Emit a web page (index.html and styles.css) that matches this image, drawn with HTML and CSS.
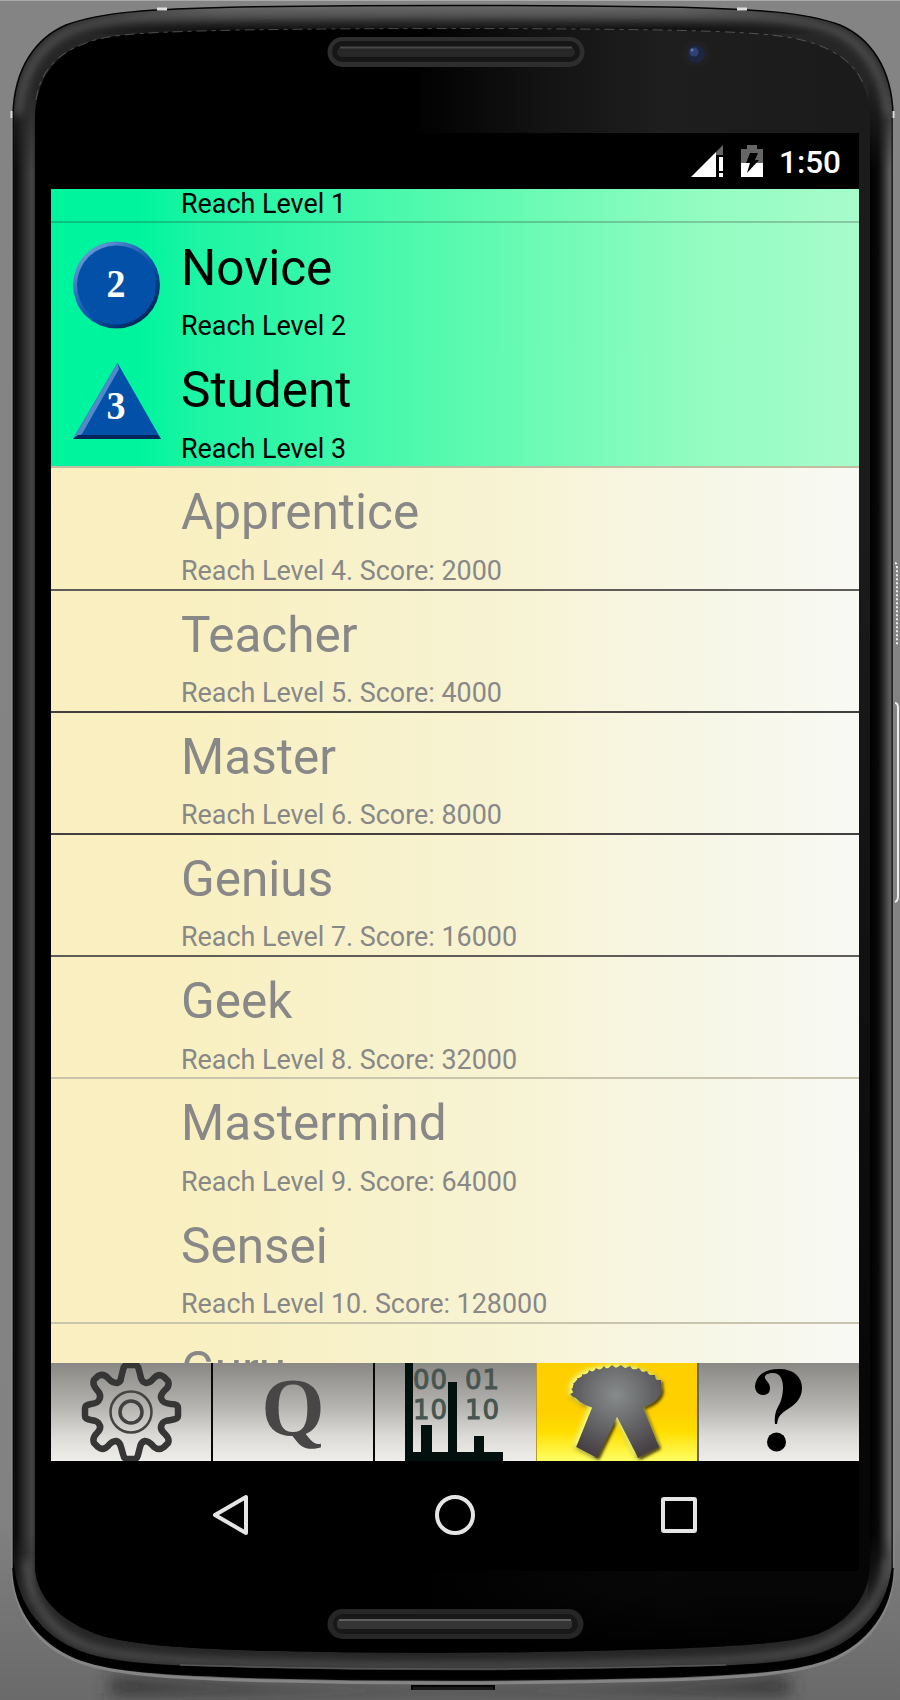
FILE: index.html
```html
<!DOCTYPE html>
<html lang="en">
<head>
<meta charset="utf-8">
<title>Levels</title>
<link rel="stylesheet" href="styles.css">
</head>
<body>
<div class="phone">
<svg class="frame" viewBox="0 0 900 1700" width="900" height="1700">
<defs>
<linearGradient id="bg" x1="0" y1="0" x2="0" y2="1"><stop offset="0" stop-color="#848484"/><stop offset=".89" stop-color="#828282"/><stop offset=".96" stop-color="#727272"/><stop offset="1" stop-color="#6a6a6a"/></linearGradient>
<linearGradient id="topband" gradientUnits="userSpaceOnUse" x1="0" y1="7" x2="0" y2="29"><stop offset="0" stop-color="#707070"/><stop offset=".45" stop-color="#444"/><stop offset=".8" stop-color="#222"/><stop offset="1" stop-color="#111"/></linearGradient>
<linearGradient id="leftband" gradientUnits="userSpaceOnUse" x1="13" y1="0" x2="35" y2="0"><stop offset="0" stop-color="#1a1a1a"/><stop offset=".12" stop-color="#0a0a0a"/><stop offset=".4" stop-color="#222"/><stop offset=".85" stop-color="#444"/><stop offset="1" stop-color="#333"/></linearGradient>
<linearGradient id="rightband" gradientUnits="userSpaceOnUse" x1="870" y1="0" x2="894" y2="0"><stop offset="0" stop-color="#000"/><stop offset=".35" stop-color="#0a0a0a"/><stop offset=".6" stop-color="#333"/><stop offset=".8" stop-color="#5a5a5a"/><stop offset="1" stop-color="#686868"/></linearGradient>
<linearGradient id="face" x1="0" x2="1" y1="0" y2="0"><stop offset=".45" stop-color="#000"/><stop offset=".62" stop-color="#141414"/><stop offset=".75" stop-color="#1e1e1e"/><stop offset="1" stop-color="#1b1b1b"/></linearGradient>
<linearGradient id="fade" x1="0" x2="0" y1="0" y2="1"><stop offset=".3" stop-color="#000" stop-opacity="0"/><stop offset=".85" stop-color="#000" stop-opacity=".75"/><stop offset=".96" stop-color="#000" stop-opacity=".78"/><stop offset="1" stop-color="#000"/></linearGradient>
<linearGradient id="vfade" x1="0" x2="0" y1="0" y2="1"><stop offset="0" stop-color="#000"/><stop offset=".06" stop-color="#fff"/><stop offset=".95" stop-color="#fff"/><stop offset="1" stop-color="#000"/></linearGradient>
<linearGradient id="hfade" x1="0" x2="1" y1="0" y2="0"><stop offset="0" stop-color="#000"/><stop offset=".2" stop-color="#fff"/><stop offset=".8" stop-color="#fff"/><stop offset="1" stop-color="#000"/></linearGradient>
<mask id="vmask" maskUnits="userSpaceOnUse" x="0" y="80" width="900" height="1530"><rect y="80" width="900" height="1530" fill="url(#vfade)"/></mask>
<mask id="hmask" maskUnits="userSpaceOnUse" x="70" y="0" width="766" height="40"><rect x="70" width="766" height="40" fill="url(#hfade)"/></mask>
<filter id="soft" x="-10%" y="-10%" width="120%" height="120%"><feGaussianBlur stdDeviation="4"/></filter>
<filter id="wide" x="-20%" y="-200%" width="140%" height="500%"><feGaussianBlur stdDeviation="9"/></filter>
<clipPath id="bodyclip"><path id="outline" d="M13 115C14 68 36 38 66 25C100 12 150 9 240 7Q450 4 666 7C756 9 806 12 840 25C870 38 892 68 893 115V1568C892 1612 866 1643 830 1658C800 1670 756 1674 666 1677Q450 1683 240 1677C150 1674 106 1670 76 1658C40 1643 14 1612 13 1568Z"/></clipPath>
</defs>
<rect width="900" height="1700" fill="url(#bg)"/>
<rect width="900" height="1" fill="#aaa"/>
<path d="M110 1678Q450 1700 790 1678V1694H110Z" fill="#2a2a2a" filter="url(#wide)"/>
<path d="M12.500 1570C14 1614 39 1646 76 1660.500C106 1672 150 1677 240 1680Q450 1686 666 1680C756 1677 800 1672 830 1660.500C867 1646 892 1614 893.500 1570" fill="none" stroke="#858585" stroke-width="3"/>
<use href="#outline" fill="#262626"/>
<g clip-path="url(#bodyclip)">
<g mask="url(#vmask)"><rect x="10" y="80" width="26" height="1530" fill="url(#leftband)"/>
<rect x="868" y="80" width="28" height="1530" fill="url(#rightband)"/></g>
<rect x="70" y="4" width="766" height="30" fill="url(#topband)" mask="url(#hmask)"/>
<path d="M18 115C22 68 44 42 70 31C100 18 150 15 240 12Q450 9 666 12C756 14 802 18 834 30C862 42 884 70 888 115" fill="none" stroke="#5c5c5c" stroke-width="6" filter="url(#soft)"/>
<path d="M27 1560C28 1602 50 1630 82 1644C112 1656 160 1660 240 1663Q450 1669 666 1663C746 1660 800 1656 826 1642C862 1624 884 1598 887 1560" fill="none" stroke="#606060" stroke-width="5" filter="url(#soft)"/>
<path d="M13 1562C14 1612 40 1643 76 1658C106 1670 150 1674 240 1677Q450 1683 666 1677C756 1674 800 1670 830 1658C866 1643 892 1612 893 1562C889 1608 862 1637 828 1651C798 1663 756 1666 666 1668Q450 1674 240 1668C150 1666 108 1663 78 1651C44 1637 17 1608 13 1562Z" fill="#000" stroke="#000" stroke-width="1.500"/>
</g>
<path id="faceshape" d="M35 115C37 80 53 55 86 43C110 33 160 32 240 30Q450 27 666 30C746 32 790 34 818 45C850 57 868 80 870 115V1568C868 1598 848 1622 818 1634C790 1643 746 1646 666 1649Q450 1656 240 1650C160 1647 125 1643 96 1634C60 1620 37 1598 35 1568Z" fill="url(#face)"/>
<path d="M35 115C37 80 53 55 86 43C110 33 160 32 240 30Q450 27 666 30C746 32 790 34 818 45C850 57 868 80 870 115V1568C868 1598 848 1622 818 1634C790 1643 746 1646 666 1649Q450 1656 240 1650C160 1647 125 1643 96 1634C60 1620 37 1598 35 1568Z" fill="url(#fade)"/>
<path d="M36 100C40 72 56 54 86 43C110 33 160 32 240 30Q450 27 666 30C746 32 790 34 818 45C842 54 858 68 864 86" fill="none" stroke="#777" stroke-width="1" stroke-dasharray="10 5 4 5" opacity=".6"/>
<use href="#outline" fill="none" stroke="#050505" stroke-width="1.500"/>
<path d="M180 1665Q450 1673 726 1665" fill="none" stroke="#565656" stroke-width="1.500"/>
<path d="M12 118V1568" stroke="#949494" stroke-width="1"/>
<path d="M894 118V1568" stroke="#858585" stroke-width="2"/><path d="M892 118V1568" stroke="#292929" stroke-width="1.500"/>
<path d="M157 9h10M737 9h10" stroke="#ddd" stroke-width="3"/><path d="M11.500 111v7M893.500 111v7" stroke="#ddd" stroke-width="2"/>
<path d="M895 563q2 0 2 4V646" fill="none" stroke="#eee" stroke-width="2" stroke-dasharray="2 2"/>
<path d="M895 703q3 0 3 5V896q0 5-3 6" fill="none" stroke="#eee" stroke-width="2"/>
<path d="M412 1690v-4H494v4" fill="#1a1a1a" stroke="#050505" stroke-width="2"/>
<rect x="327.500" y="37" width="257" height="30" rx="15" fill="#2e2e2e"/><rect x="332" y="41" width="248" height="21" rx="10.500" fill="#161616"/><rect x="337" y="47" width="238" height="10" rx="5" fill="#272727"/><path d="M340 47.500H572" stroke="#484848" stroke-width="2"/>
<rect x="327.500" y="1609" width="256" height="30" rx="15" fill="#262626"/><rect x="333" y="1614" width="245" height="20" rx="10" fill="#181818"/><rect x="337" y="1619" width="235" height="10" rx="4" fill="#353535"/><path d="M339 1620H571" stroke="#606060" stroke-width="2"/>
<circle cx="696" cy="54" r="13.500" fill="#202022"/><circle cx="696" cy="54" r="9" fill="#1e253e"/><circle cx="694" cy="52" r="4.500" fill="#2f4273"/><circle cx="692" cy="50" r="1.500" fill="#5f7aa8"/>
</svg>
<main class="screen">
<header class="status">
<svg class="signal" width="34" height="34" viewBox="0 0 34 34"><path d="M1 33H26V8Z" fill="#fff"/><path d="M26 8L33 1V11H26Z" fill="#666"/><path d="M29 13h4v14h-4zM29 29h4v4h-4z" fill="#fff"/></svg>
<svg class="battery" width="22" height="32" viewBox="0 0 22 32"><path d="M0 4H6V0H16V4H22V18H0Z" fill="#666"/><path d="M0 18H22V32H0Z" fill="#fff"/><path d="M9 8H17L14 15H18L6 28L9 18H5Z" fill="#000"/></svg>
<span class="clock">1:50</span>
</header>
<section class="list">
<article class="row done first lined"><p>Reach Level 1</p></article>
<article class="row done tall"><svg class="badge" width="88" height="90" viewBox="0 0 88 90"><defs><linearGradient id="rim" x1=".15" y1=".1" x2=".85" y2=".9"><stop offset="0" stop-color="#6a9ad8"/><stop offset=".35" stop-color="#2869ba"/><stop offset=".6" stop-color="#0650a8"/><stop offset="1" stop-color="#012453"/></linearGradient></defs><circle cx="43.500" cy="44" r="43.500" fill="url(#rim)"/><circle cx="43.500" cy="44" r="39.500" fill="#0350a8"/><text x="43" y="56" class="num" textLength="19" lengthAdjust="spacingAndGlyphs">2</text></svg><h2>Novice</h2><p>Reach Level 2</p></article>
<article class="row done lined tan"><svg class="badge" width="88" height="90" viewBox="0 0 88 90"><path d="M0 76L44.500 0L88 76Z" fill="#0350a8"/><path d="M0 76L44.500 0L46 6L9 71Z" fill="#5289cb"/><path d="M0 76L5 72H85L88 76Z" fill="#01265b"/><text x="43" y="56" class="num" textLength="19" lengthAdjust="spacingAndGlyphs">3</text></svg><h2>Student</h2><p>Reach Level 3</p></article>
<article class="row lined mid"><h2>Apprentice</h2><p>Reach Level 4. Score: 2000</p></article>
<article class="row lined dark"><h2>Teacher</h2><p>Reach Level 5. Score: 4000</p></article>
<article class="row lined dark"><h2>Master</h2><p>Reach Level 6. Score: 8000</p></article>
<article class="row lined mid"><h2>Genius</h2><p>Reach Level 7. Score: 16000</p></article>
<article class="row lined light"><h2>Geek</h2><p>Reach Level 8. Score: 32000</p></article>
<article class="row"><h2>Mastermind</h2><p>Reach Level 9. Score: 64000</p></article>
<article class="row lined light"><h2>Sensei</h2><p>Reach Level 10. Score: 128000</p></article>
<article class="row last-row"><h2>Guru</h2></article>
</section>
<nav class="tabs">
<div class="tab"><svg width="161" height="98" viewBox="0 0 161 98"><path d="M72 7Q73 2 76 2H84Q87 2 88 7L90 15Q91 19 95 20Q99 20 103 15Q108 10 113 14L117 18Q119 23 114 27Q108 33 111 37Q112 40 120 41Q127 41 127 45V53Q127 56 120 57Q112 58 111 61Q108 66 114 71Q119 76 117 80L113 84Q108 88 103 84Q98 78 94 78Q90 79 89 84L87 92Q86 96 83 96H76Q73 96 72 91L70 84Q69 79 65 78Q61 78 57 83Q52 88 47 84L43 80Q41 75 46 70Q51 65 48 61Q47 58 40 57Q34 56 34 53V45Q34 42 40 41Q47 40 48 37Q51 32 46 27Q41 21 43 17L47 13Q52 10 57 15Q61 20 66 20Q70 19 70 15Z" fill="none" stroke="#363636" stroke-width="6.500"/><circle cx="80" cy="49" r="20.500" fill="none" stroke="#444" stroke-width="2.500"/><circle cx="80" cy="49" r="11" fill="none" stroke="#404040" stroke-width="3.500"/></svg></div>
<div class="tab"><svg width="161" height="98" viewBox="0 0 161 98"><text x="80" y="71.500" class="q" textLength="63" lengthAdjust="spacingAndGlyphs">Q</text></svg></div>
<div class="tab"><svg width="161" height="98" viewBox="0 0 161 98"><path d="M30 0H38V89H46V62H57V89H73V19H82V89H99V73H109V89H128V98H30Z" fill="#03110e"/><g class="bits"><text x="38" y="26" textLength="34">00</text><text x="38" y="56" textLength="34">10</text><text x="90" y="26" textLength="34">01</text><text x="90" y="56" textLength="34">10</text></g></svg></div>
<div class="tab active"><svg width="161" height="98" viewBox="0 0 161 98"><defs><radialGradient id="metal" gradientUnits="userSpaceOnUse" cx="79" cy="32" r="63"><stop stop-color="#888b8c"/><stop offset=".5" stop-color="#67686a"/><stop offset="1" stop-color="#464044"/></radialGradient><filter id="shadow" x="-20%" y="-20%" width="140%" height="140%"><feDropShadow dx="-3" dy="-2" stdDeviation="2" flood-color="#ffff70"/><feDropShadow dx="2" dy="2" stdDeviation="1.500" flood-color="#453800"/></filter></defs><g filter="url(#shadow)" fill="url(#metal)"><path d="M56 42L39 84L60 95L80 54L101 95L122 84L105 42Z"/><ellipse cx="80" cy="26.500" rx="44.800" ry="22"/><path d="M36 34L33 31L37 29L34 26L38 24L36 20L41 19L40 15L45 15L45 11L50 12L52 7L56 9L59 5L63 7L67 3L70 6L75 2L79 5L84 2L88 5L93 3L96 7L102 5L105 9L110 8L112 12L118 12L119 17L124 17L124 27L100 40H55Z"/></g></svg></div>
<div class="tab last"><svg width="161" height="98" viewBox="0 0 161 98"><path d="M56 23C58 10 68 6 80 6C95 6 103 14 103 25C103 37 94 43 86 48C79 53 79 56 78 61H76C75 52 77 47 81 40C85 31 87 10 74 10C69 10 65 12 66 15C67 18 71 20 71 25C71 30 68 32 64 32C59 32 56 28 56 23Z"/><circle cx="77.500" cy="79" r="9.500"/></svg></div>
</nav>
<footer class="system">
<svg width="38" height="44" viewBox="0 0 38 44"><path d="M3 21L34 3V39Z" class="line"/></svg>
<svg width="42" height="44" viewBox="0 0 42 44"><circle cx="21" cy="21" r="18" class="line"/></svg>
<svg width="38" height="44" viewBox="0 0 38 44"><rect x="3" y="5" width="32" height="32" rx="1" class="line"/></svg>
</footer>
</main>
</div>
</body>
</html>
```
FILE: styles.css
```css
* { box-sizing: border-box; }
body { margin: 0; background: #828282; font-family: Roboto, sans-serif; }
.phone { position: relative; width: 900px; height: 1700px; padding: 133px 41px 0 51px; overflow: hidden; }
.frame { position: absolute; inset: 0; }
.screen { position: relative; display: flex; flex-direction: column; width: 808px; height: 1438px; background: #000; }
.status { display: flex; height: 56px; padding: 11px 18px 0 0; justify-content: flex-end; align-items: flex-start; color: #fff; }
.battery { margin: 1px 16px 0 17px; }
.clock { font-size: 31.5px; font-weight: 500; line-height: 38px; }
.list { height: 1174px; overflow: hidden; background: linear-gradient(90deg, #faefc0 0, #f9f0c2 20%, #f7f3d2 55%, #f7f7e8 82%, #f8f9f3 100%); }
.row { display: grid; grid-template-columns: 130px 1fr; grid-template-rows: 76px 1fr; height: 122.2px; color: #888; }
.row h2 { grid-column: 2; margin: 0; padding-top: 14px; font-size: 49.5px; line-height: 60px; font-weight: 400; }
.row p { grid-column: 2; grid-row: 2; margin: 0; padding-top: 10.4px; font-size: 26.9px; line-height: 32px; }
.row.first { display: block; height: 34px; padding-left: 130px; }
.row.first p { padding: 0; line-height: 31px; }
.row.tall { height: 123.2px; grid-template-rows: 76.5px 1fr; }
.row.tall h2 { padding-top: 14.5px; }
.row.last-row h2 { padding-top: 16px; }
.done { color: #000; background: linear-gradient(90deg, #00f49e 0, #00f49e 11%, #1cf5a3 18%, #60fab1 54%, #92fcc0 80%, #a7fccb 100%); }
.lined { border-bottom: 2px solid rgba(40, 40, 40, .24); }
.tan { border-bottom-color: #c0bda0; background-clip: padding-box; }
.mid { border-bottom-color: #605c59; }
.dark { border-bottom-color: #454040; }
.light { border-bottom-color: #c8c4ae; }
.badge { grid-column: 1; grid-row: 1 / 3; margin: 17px 0 0 22px; }
.tall .badge { margin-top: 18px; }
.num { font: bold 41px "Liberation Serif", serif; text-anchor: middle; fill: #fff; }
.tabs { display: grid; grid-template-columns: 162px 162px 161px 163px 160px; height: 98px; }
.tab { overflow: hidden; border-right: 2px solid #080808; background: linear-gradient(#898885 0, #b6b4b0 45%, #dddbd7 75%, #efeeeb 100%); }
.tab svg { display: block; }
.tab:nth-child(3) { border-right: 0; }
.tab.active { border-right-color: #666; border-left: 1px solid #b89c24; background: linear-gradient(#ffcf00 0, #ffd000 50%, #ffde00 70%, #ffff62 100%); }
.tab.last { border: 0; }
.q { font: bold 82px "Liberation Serif", serif; fill: #494648; text-anchor: middle; }
.bits { font: 26px "DejaVu Sans", sans-serif; fill: #465550; stroke: #465550; stroke-width: 1; }
.system { display: flex; height: 110px; padding: 33px 161px 0; justify-content: space-between; }
.line { fill: none; stroke: #e5e5e5; stroke-width: 4; stroke-linejoin: round; }
```
